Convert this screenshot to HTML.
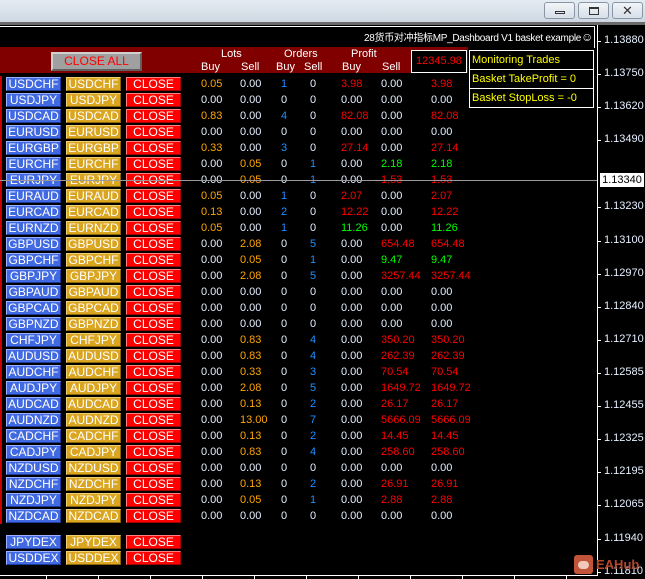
<!DOCTYPE html>
<html><head><meta charset="utf-8"><style>
*{margin:0;padding:0;box-sizing:border-box}
body{width:645px;height:579px;background:#000;position:relative;overflow:hidden;font-family:"Liberation Sans","Noto Sans CJK SC",sans-serif;font-size:11px}
.a{position:absolute;white-space:nowrap}
.tb{left:0;top:0;width:645px;height:22px;background:linear-gradient(#e4ebf2,#cfd8e2)}
.wb{top:2px;width:31px;height:17px;border:1px solid #8a96a6;border-radius:3px;background:linear-gradient(#f2f5f8,#d6dee8)}
.r{position:absolute;left:0;height:14px;width:190px}
.b{position:absolute;top:0;height:14px;width:55px;font-size:12px;line-height:13px;text-align:center;color:#fff;border-top:1px solid #9bb0ff;border-left:1px solid #9bb0ff;border-bottom:1px solid #1c3a9a;border-right:1px solid #1c3a9a}
.b1{left:6px;background:#4169e1}
.b2{left:66px;background:#daa520;border-color:#f0d070 #8a6508 #8a6508 #f0d070}
.b3{left:126px;background:#f00;border-color:#ff8080 #a00000 #a00000 #ff8080}
.n{position:absolute;top:76px;color:#e6f0ff;font-size:11px;line-height:16px}
.o{color:#ffa500}.bl{color:#1e90ff}.rd{color:#f00}.g{color:#00ff00}
.p{position:absolute;left:604px;color:#e6f0ff;font-size:11px}
.tk{position:absolute;left:597px;width:4px;height:1px;background:#fff}
.mb{position:absolute;left:469px;width:125px;height:20px;border:1px solid #fff;color:#ff0;font-size:11px;line-height:18px;padding-left:2px}
</style></head><body>
<div class="a tb"></div>
<div class="a wb" style="left:544px"><div class="a" style="left:10px;top:8px;width:10px;height:3px;border:1px solid #333"></div></div>
<div class="a wb" style="left:578px"><div class="a" style="left:10px;top:4px;width:10px;height:8px;border:1px solid #333;border-top-width:2px"></div></div>
<div class="a wb" style="left:612px;color:#333;font-size:13px;text-align:center;line-height:15px">✕</div>
<div class="a" style="left:0;top:22px;width:645px;height:3px;background:#6a6a6a"></div>
<div class="a" style="left:0;top:26px;width:595px;height:1px;background:#fff"></div>
<div class="a" style="left:594px;top:26px;width:1px;height:22px;background:#fff"></div>
<div class="a" style="left:597px;top:25px;width:1px;height:551px;background:#fff"></div>
<div class="a" style="left:0;top:575px;width:598px;height:1px;background:#fff"></div>
<div class="a" style="right:52px;top:29px;color:#fff;font-size:10px;letter-spacing:-0.3px;text-align:right">28货币对冲指标MP_Dashboard V1 basket example<span style="font-size:12px">☺</span></div>
<div class="a" style="left:0;top:47px;width:468px;height:26px;background:#800000"></div>
<div class="a" style="left:51px;top:52px;width:91px;height:19px;background:#a0a0a0;border:2px solid;border-color:#d0d0d0 #606060 #606060 #d0d0d0;color:#f00;font-size:12px;text-align:center;line-height:15px">CLOSE ALL</div>
<div class="a" style="left:221px;top:48px;color:#fff;font-size:11px">Lots</div>
<div class="a" style="left:284px;top:48px;color:#fff;font-size:11px">Orders</div>
<div class="a" style="left:351px;top:48px;color:#fff;font-size:11px">Profit</div>
<div class="a" style="left:201px;top:61px;color:#fff">Buy</div>
<div class="a" style="left:241px;top:61px;color:#fff">Sell</div>
<div class="a" style="left:276px;top:61px;color:#fff">Buy</div>
<div class="a" style="left:304px;top:61px;color:#fff">Sell</div>
<div class="a" style="left:342px;top:61px;color:#fff">Buy</div>
<div class="a" style="left:382px;top:61px;color:#fff">Sell</div>
<div class="a" style="left:411px;top:50px;width:56px;height:23px;border:1px solid #fff;background:#000;color:#f00;line-height:21px;text-align:center">12345.98</div>
<div class="mb" style="top:50px">Monitoring Trades</div>
<div class="mb" style="top:69px">Basket TakeProfit = 0</div>
<div class="mb" style="top:88px">Basket StopLoss = -0</div>
<div class="a" style="left:0;top:76px;width:2px;height:448px;background:#c00"></div>

<div class="a" style="left:0;top:77px">
<div class="r" style="top:0"><div class="b b1">USDCHF</div><div class="b b2">USDCHF</div><div class="b b3">CLOSE</div></div>
<div class="r" style="top:16px"><div class="b b1">USDJPY</div><div class="b b2">USDJPY</div><div class="b b3">CLOSE</div></div>
<div class="r" style="top:32px"><div class="b b1">USDCAD</div><div class="b b2">USDCAD</div><div class="b b3">CLOSE</div></div>
<div class="r" style="top:48px"><div class="b b1">EURUSD</div><div class="b b2">EURUSD</div><div class="b b3">CLOSE</div></div>
<div class="r" style="top:64px"><div class="b b1">EURGBP</div><div class="b b2">EURGBP</div><div class="b b3">CLOSE</div></div>
<div class="r" style="top:80px"><div class="b b1">EURCHF</div><div class="b b2">EURCHF</div><div class="b b3">CLOSE</div></div>
<div class="r" style="top:96px"><div class="b b1">EURJPY</div><div class="b b2">EURJPY</div><div class="b b3">CLOSE</div></div>
<div class="r" style="top:112px"><div class="b b1">EURAUD</div><div class="b b2">EURAUD</div><div class="b b3">CLOSE</div></div>
<div class="r" style="top:128px"><div class="b b1">EURCAD</div><div class="b b2">EURCAD</div><div class="b b3">CLOSE</div></div>
<div class="r" style="top:144px"><div class="b b1">EURNZD</div><div class="b b2">EURNZD</div><div class="b b3">CLOSE</div></div>
<div class="r" style="top:160px"><div class="b b1">GBPUSD</div><div class="b b2">GBPUSD</div><div class="b b3">CLOSE</div></div>
<div class="r" style="top:176px"><div class="b b1">GBPCHF</div><div class="b b2">GBPCHF</div><div class="b b3">CLOSE</div></div>
<div class="r" style="top:192px"><div class="b b1">GBPJPY</div><div class="b b2">GBPJPY</div><div class="b b3">CLOSE</div></div>
<div class="r" style="top:208px"><div class="b b1">GBPAUD</div><div class="b b2">GBPAUD</div><div class="b b3">CLOSE</div></div>
<div class="r" style="top:224px"><div class="b b1">GBPCAD</div><div class="b b2">GBPCAD</div><div class="b b3">CLOSE</div></div>
<div class="r" style="top:240px"><div class="b b1">GBPNZD</div><div class="b b2">GBPNZD</div><div class="b b3">CLOSE</div></div>
<div class="r" style="top:256px"><div class="b b1">CHFJPY</div><div class="b b2">CHFJPY</div><div class="b b3">CLOSE</div></div>
<div class="r" style="top:272px"><div class="b b1">AUDUSD</div><div class="b b2">AUDUSD</div><div class="b b3">CLOSE</div></div>
<div class="r" style="top:288px"><div class="b b1">AUDCHF</div><div class="b b2">AUDCHF</div><div class="b b3">CLOSE</div></div>
<div class="r" style="top:304px"><div class="b b1">AUDJPY</div><div class="b b2">AUDJPY</div><div class="b b3">CLOSE</div></div>
<div class="r" style="top:320px"><div class="b b1">AUDCAD</div><div class="b b2">AUDCAD</div><div class="b b3">CLOSE</div></div>
<div class="r" style="top:336px"><div class="b b1">AUDNZD</div><div class="b b2">AUDNZD</div><div class="b b3">CLOSE</div></div>
<div class="r" style="top:352px"><div class="b b1">CADCHF</div><div class="b b2">CADCHF</div><div class="b b3">CLOSE</div></div>
<div class="r" style="top:368px"><div class="b b1">CADJPY</div><div class="b b2">CADJPY</div><div class="b b3">CLOSE</div></div>
<div class="r" style="top:384px"><div class="b b1">NZDUSD</div><div class="b b2">NZDUSD</div><div class="b b3">CLOSE</div></div>
<div class="r" style="top:400px"><div class="b b1">NZDCHF</div><div class="b b2">NZDCHF</div><div class="b b3">CLOSE</div></div>
<div class="r" style="top:416px"><div class="b b1">NZDJPY</div><div class="b b2">NZDJPY</div><div class="b b3">CLOSE</div></div>
<div class="r" style="top:432px"><div class="b b1">NZDCAD</div><div class="b b2">NZDCAD</div><div class="b b3">CLOSE</div></div>
<div class="r" style="top:458px"><div class="b b1">JPYDEX</div><div class="b b2">JPYDEX</div><div class="b b3">CLOSE</div></div>
<div class="r" style="top:474px"><div class="b b1">USDDEX</div><div class="b b2">USDDEX</div><div class="b b3">CLOSE</div></div>
</div>

<div class="n" style="left:201px"><span class="o">0.05</span><br>0.00<br><span class="o">0.83</span><br>0.00<br><span class="o">0.33</span><br>0.00<br>0.00<br><span class="o">0.05</span><br><span class="o">0.13</span><br><span class="o">0.05</span><br>0.00<br>0.00<br>0.00<br>0.00<br>0.00<br>0.00<br>0.00<br>0.00<br>0.00<br>0.00<br>0.00<br>0.00<br>0.00<br>0.00<br>0.00<br>0.00<br>0.00<br>0.00</div>
<div class="n" style="left:240px">0.00<br>0.00<br>0.00<br>0.00<br>0.00<br><span class="o">0.05</span><br><span class="o">0.05</span><br>0.00<br>0.00<br>0.00<br><span class="o">2.08</span><br><span class="o">0.05</span><br><span class="o">2.08</span><br>0.00<br>0.00<br>0.00<br><span class="o">0.83</span><br><span class="o">0.83</span><br><span class="o">0.33</span><br><span class="o">2.08</span><br><span class="o">0.13</span><br><span class="o">13.00</span><br><span class="o">0.13</span><br><span class="o">0.83</span><br>0.00<br><span class="o">0.13</span><br><span class="o">0.05</span><br>0.00</div>
<div class="n" style="left:281px"><span class="bl">1</span><br>0<br><span class="bl">4</span><br>0<br><span class="bl">3</span><br>0<br>0<br><span class="bl">1</span><br><span class="bl">2</span><br><span class="bl">1</span><br>0<br>0<br>0<br>0<br>0<br>0<br>0<br>0<br>0<br>0<br>0<br>0<br>0<br>0<br>0<br>0<br>0<br>0</div>
<div class="n" style="left:310px">0<br>0<br>0<br>0<br>0<br><span class="bl">1</span><br><span class="bl">1</span><br>0<br>0<br>0<br><span class="bl">5</span><br><span class="bl">1</span><br><span class="bl">5</span><br>0<br>0<br>0<br><span class="bl">4</span><br><span class="bl">4</span><br><span class="bl">3</span><br><span class="bl">5</span><br><span class="bl">2</span><br><span class="bl">7</span><br><span class="bl">2</span><br><span class="bl">4</span><br>0<br><span class="bl">2</span><br><span class="bl">1</span><br>0</div>
<div class="n" style="left:341px"><span class="rd">3.98</span><br>0.00<br><span class="rd">82.08</span><br>0.00<br><span class="rd">27.14</span><br>0.00<br>0.00<br><span class="rd">2.07</span><br><span class="rd">12.22</span><br><span class="g">11.26</span><br>0.00<br>0.00<br>0.00<br>0.00<br>0.00<br>0.00<br>0.00<br>0.00<br>0.00<br>0.00<br>0.00<br>0.00<br>0.00<br>0.00<br>0.00<br>0.00<br>0.00<br>0.00</div>
<div class="n" style="left:381px">0.00<br>0.00<br>0.00<br>0.00<br>0.00<br><span class="g">2.18</span><br><span class="rd">1.53</span><br>0.00<br>0.00<br>0.00<br><span class="rd">654.48</span><br><span class="g">9.47</span><br><span class="rd">3257.44</span><br>0.00<br>0.00<br>0.00<br><span class="rd">350.20</span><br><span class="rd">262.39</span><br><span class="rd">70.54</span><br><span class="rd">1649.72</span><br><span class="rd">26.17</span><br><span class="rd">5666.09</span><br><span class="rd">14.45</span><br><span class="rd">258.60</span><br>0.00<br><span class="rd">26.91</span><br><span class="rd">2.88</span><br>0.00</div>
<div class="n" style="left:431px"><span class="rd">3.98</span><br>0.00<br><span class="rd">82.08</span><br>0.00<br><span class="rd">27.14</span><br><span class="g">2.18</span><br><span class="rd">1.53</span><br><span class="rd">2.07</span><br><span class="rd">12.22</span><br><span class="g">11.26</span><br><span class="rd">654.48</span><br><span class="g">9.47</span><br><span class="rd">3257.44</span><br>0.00<br>0.00<br>0.00<br><span class="rd">350.20</span><br><span class="rd">262.39</span><br><span class="rd">70.54</span><br><span class="rd">1649.72</span><br><span class="rd">26.17</span><br><span class="rd">5666.09</span><br><span class="rd">14.45</span><br><span class="rd">258.60</span><br>0.00<br><span class="rd">26.91</span><br><span class="rd">2.88</span><br>0.00</div>

<div class="a" style="left:0;top:180px;width:597px;height:1px;background:#9a9a9a"></div>
<div class="a" style="left:600px;top:173px;width:44px;height:14px;background:#fff;color:#000;font-size:11px;line-height:14px;text-align:center">1.13340</div>

<div class="tk" style="top:41px"></div><div class="p" style="top:34px">1.13880</div>
<div class="tk" style="top:74px"></div><div class="p" style="top:67px">1.13750</div>
<div class="tk" style="top:107px"></div><div class="p" style="top:100px">1.13620</div>
<div class="tk" style="top:140px"></div><div class="p" style="top:133px">1.13490</div>
<div class="tk" style="top:207px"></div><div class="p" style="top:200px">1.13230</div>
<div class="tk" style="top:241px"></div><div class="p" style="top:234px">1.13100</div>
<div class="tk" style="top:274px"></div><div class="p" style="top:267px">1.12970</div>
<div class="tk" style="top:307px"></div><div class="p" style="top:300px">1.12840</div>
<div class="tk" style="top:340px"></div><div class="p" style="top:333px">1.12710</div>
<div class="tk" style="top:373px"></div><div class="p" style="top:366px">1.12585</div>
<div class="tk" style="top:406px"></div><div class="p" style="top:399px">1.12455</div>
<div class="tk" style="top:439px"></div><div class="p" style="top:432px">1.12325</div>
<div class="tk" style="top:472px"></div><div class="p" style="top:465px">1.12195</div>
<div class="tk" style="top:505px"></div><div class="p" style="top:498px">1.12065</div>
<div class="tk" style="top:539px"></div><div class="p" style="top:532px">1.11940</div>
<div class="tk" style="top:572px"></div><div class="p" style="top:565px">1.11810</div>

<div class="a" style="left:46px;top:575px;width:1px;height:4px;background:#fff"></div>
<div class="a" style="left:98px;top:575px;width:1px;height:4px;background:#fff"></div>
<div class="a" style="left:150px;top:575px;width:1px;height:4px;background:#fff"></div>
<div class="a" style="left:202px;top:575px;width:1px;height:4px;background:#fff"></div>
<div class="a" style="left:254px;top:575px;width:1px;height:4px;background:#fff"></div>
<div class="a" style="left:306px;top:575px;width:1px;height:4px;background:#fff"></div>
<div class="a" style="left:358px;top:575px;width:1px;height:4px;background:#fff"></div>
<div class="a" style="left:410px;top:575px;width:1px;height:4px;background:#fff"></div>
<div class="a" style="left:462px;top:575px;width:1px;height:4px;background:#fff"></div>
<div class="a" style="left:514px;top:575px;width:1px;height:4px;background:#fff"></div>
<div class="a" style="left:566px;top:575px;width:1px;height:4px;background:#fff"></div>

<div class="a" style="left:574px;top:555px;width:19px;height:19px;background:#c2543a;border-radius:3px"><div class="a" style="left:4px;top:6px;width:11px;height:8px;background:#f0c8bc;border-radius:4px"></div></div>
<div class="a" style="left:596px;top:557px;color:#b4482e;font-size:13px;font-weight:bold">EAHub</div>
</body></html>
